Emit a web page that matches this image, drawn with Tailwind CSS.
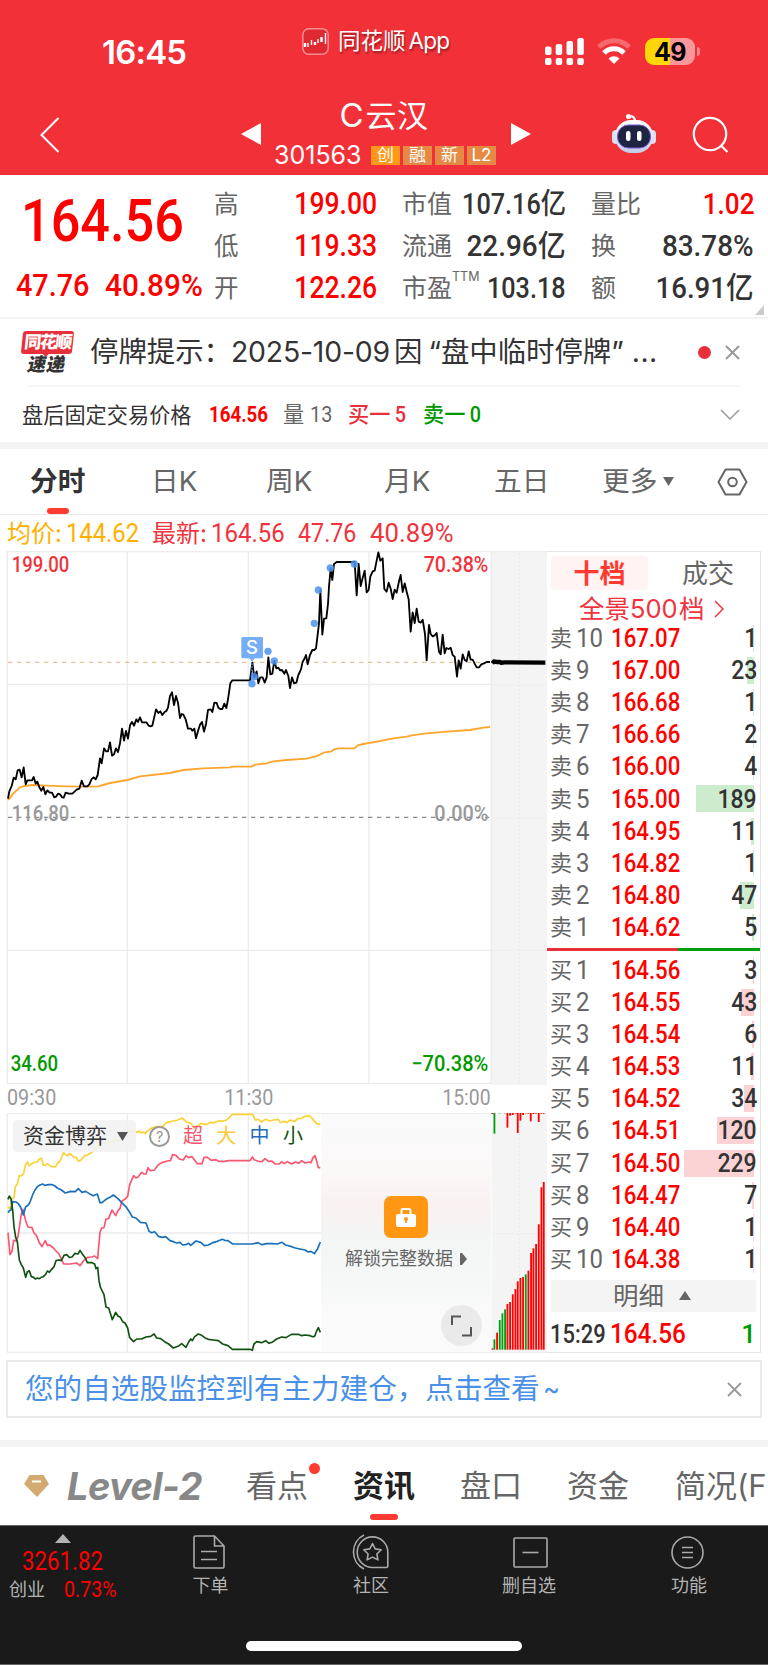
<!DOCTYPE html>
<html lang="zh-CN">
<head>
  <meta charset="UTF-8">
  <title>C云汉 301563</title>
  <meta name="viewport" content="width=device-width, initial-scale=1.0">
  <script src="https://cdn.jsdelivr.net/npm/@tailwindcss/browser@4"></script>
</head>
<body class="w-[768px] h-[1665px] overflow-hidden bg-white font-['Inter','Noto_Sans_CJK_SC',sans-serif] text-[#333] whitespace-nowrap">

  <!-- Header -->
  <header class="h-[175px] bg-[#f23038] text-white">
    <div class="h-[90px] flex items-start">
      <div class="w-[302px] pl-[102px] pt-[28px] text-[33px] leading-[48px] font-semibold tracking-[-0.800px]">16:45</div>
      <div class="w-[243px] flex items-center pt-[24px]">
        <svg class="w-[27px] h-[27px]" viewBox="0 0 27 27">
          <rect x=".8" y=".8" width="25.4" height="25.4" rx="6" fill="#e02a32" stroke="#f98c90" stroke-width="1.5"/>
          <path d="M3 15v4M13 14v3M19.500 9v5" stroke="#fff" stroke-width="2.400"/>
          <path d="M6 15v4M9.500 12v5M16 11v4M23.500 5v11" stroke="#fff" stroke-width="1.400"/>
        </svg>
        <span class="ml-[9px] text-[22.500px] leading-[34px] [text-shadow:1px_2px_2px_rgba(0,0,0,0.4)]">同花顺</span><span class="ml-[3px] text-[22.500px] leading-[34px] tracking-[-0.800px] [text-shadow:1px_2px_2px_rgba(0,0,0,0.4)]">App</span>
      </div>
      <div class="flex pt-[37px]">
        <svg class="w-[39px] h-[29px]" viewBox="0 0 39 29" fill="#fff">
          <rect x="0" y="9.500" width="6.500" height="8.500" rx="2"/><rect x="10.700" y="7" width="6.500" height="11" rx="2"/><rect x="21.500" y="4" width="6.500" height="14" rx="2"/><rect x="32.300" y="1" width="6.500" height="17" rx="2"/>
          <rect x="0" y="21" width="6.500" height="7" rx="2"/><rect x="10.700" y="21" width="6.500" height="7" rx="2"/><rect x="21.500" y="21" width="6.500" height="7" rx="2"/><rect x="32.300" y="21" width="6.500" height="7" rx="2"/>
        </svg>
        <svg class="ml-[13px] w-[34px] h-[29px]" viewBox="0 0 34 29" fill="none">
          <path d="M1.800 10a21.500 21.500 0 0 1 30.400 0" stroke="#fff" stroke-opacity=".28" stroke-width="5"/>
          <path d="M7 16a14 14 0 0 1 20 0" stroke="#fff" stroke-width="5"/>
          <path d="M17 27l-5.500-5.500a8 8 0 0 1 11 0z" fill="#fff"/>
        </svg>
        <div class="ml-[14px] mt-px w-[50px] h-[27px] rounded-[9px] bg-linear-to-r from-[#ffd60a] from-50% to-[#f9979b] to-50% text-black text-[25px] leading-[28px] font-bold text-center tracking-[-0.500px]">49</div>
        <div class="ml-[2px] mt-[10px] w-[3px] h-[9px] rounded-r-full bg-[#f9868b]"></div>
      </div>
    </div>
    <div class="h-[85px] flex">
      <svg class="ml-[40px] mt-[27px] w-[20px] h-[36px]" viewBox="0 0 20 36"><path d="M18.500 1L1.500 18l17 17" fill="none" stroke="#fff" stroke-width="2"/></svg>
      <svg class="ml-[181px] mt-[33px] w-[20px] h-[22px]" viewBox="0 0 20 22"><path d="M0 11L20 0v22z" fill="#fff"/></svg>
      <div class="w-[250px] flex flex-col items-center">
        <div class="mt-[4px] mr-[4px] text-[31px] leading-[42px] tracking-[0.500px]"><span class="inline-block w-[26px] text-[33px]">C</span>云汉</div>
        <div class="mt-[6px] flex items-center h-[24px] gap-[3px] text-[17px] leading-[19px] text-center">
          <span class="-ml-[2px] w-[94px] text-left text-[25px] leading-[24px]">301563</span>
          <span class="w-[29px] h-[19px] bg-[#ff9718]">创</span>
          <span class="w-[29px] h-[19px] bg-[#e58a45]">融</span>
          <span class="w-[29px] h-[19px] bg-[#e58a45]">新</span>
          <span class="w-[29px] h-[19px] bg-[#e58a45]">L2</span>
        </div>
      </div>
      <svg class="mt-[33px] w-[20px] h-[22px]" viewBox="0 0 20 22"><path d="M20 11L0 0v22z" fill="#fff"/></svg>
      <svg class="ml-[81px] mt-[23px] w-[44px] h-[42px]" viewBox="0 0 44 42">
        <defs><linearGradient id="head" x1="0" y1="0" x2="0" y2="1"><stop offset="0" stop-color="#fff"/><stop offset="1" stop-color="#c2cbe8"/></linearGradient></defs>
        <path d="M23 9c0-5-2-6-6-6" fill="none" stroke="#f3f5ff" stroke-width="2.500"/><circle cx="16.500" cy="3.500" r="2.500" fill="#fff"/>
        <rect x="0" y="17" width="8" height="14" rx="4" fill="#dbe0f3"/><rect x="36" y="17" width="8" height="14" rx="4" fill="#dbe0f3"/>
        <rect x="3" y="7" width="38" height="33" rx="16" fill="url(#head)"/>
        <rect x="5.500" y="12" width="33" height="23" rx="11" fill="#1d2541" stroke="#7a5be0" stroke-width="1"/>
        <rect x="14" y="18" width="4.500" height="10" rx="2.200" fill="#fff"/><rect x="25" y="18" width="4.500" height="10" rx="2.200" fill="#fff"/>
      </svg>
      <svg class="ml-[36px] mt-[26px] w-[38px] h-[38px]" viewBox="0 0 38 38" fill="none" stroke="#fff" stroke-width="2.200"><circle cx="18" cy="18" r="16.200"/><path d="M28.500 29l7 7"/></svg>
    </div>
  </header>

  <!-- Quote -->
  <section class="relative h-[144px] border-b-2 border-[#f2f2f2] flex pt-[8px]">
    <div class="w-[214px] font-['Roboto'] font-medium text-[#f00]">
      <div class="ml-[21px] mt-[4px] h-[66px] text-[60px] leading-[67px] origin-left scale-x-[0.870]">164.56</div>
      <div class="ml-[16px] mt-[11px] flex text-[32px] leading-[42px]"><span class="w-[89px] origin-left scale-x-[0.900]">47.76</span><span class="origin-left scale-x-[0.930]">40.89%</span></div>
    </div>
    <div class="w-[163px] text-[24.500px] leading-[42px] text-[#666]">
      <div class="flex justify-between"><span>高</span><b class="font-['Roboto'] font-medium text-[30.500px] text-[#f00] origin-right scale-x-[0.870]">199.00</b></div>
      <div class="flex justify-between"><span>低</span><b class="font-['Roboto'] font-medium text-[30.500px] text-[#f00] origin-right scale-x-[0.870]">119.33</b></div>
      <div class="flex justify-between"><span>开</span><b class="font-['Roboto'] font-medium text-[30.500px] text-[#f00] origin-right scale-x-[0.870]">122.26</b></div>
    </div>
    <div class="ml-[25px] w-[164px] text-[25px] leading-[42px] text-[#666]">
      <div class="flex justify-between"><span>市值</span><b class="w-[114px] flex justify-end font-['Roboto','Noto_Sans_CJK_SC'] font-medium text-[29px] text-[#333] origin-right scale-x-[0.870]">107.16亿</b></div>
      <div class="flex justify-between"><span>流通</span><b class="font-['Roboto','Noto_Sans_CJK_SC'] font-medium text-[30px] text-[#333] origin-right scale-x-[0.930]">22.96亿</b></div>
      <div class="flex justify-between"><span class="flex">市盈<i class="not-italic text-[12.500px] leading-[20px]">TTM</i></span><b class="-ml-4 font-['Roboto'] font-medium text-[30px] text-[#333] origin-right scale-x-[0.840]">103.18</b></div>
    </div>
    <div class="ml-[25px] w-[163px] text-[25px] leading-[42px] text-[#666]">
      <div class="flex justify-between"><span>量比</span><b class="font-['Roboto'] font-medium text-[30px] text-[#f00] origin-right scale-x-[0.870]">1.02</b></div>
      <div class="flex justify-between"><span>换</span><b class="font-['Roboto'] font-medium text-[30px] text-[#333] origin-right scale-x-[0.930]">83.78%</b></div>
      <div class="flex justify-between"><span>额</span><b class="font-['Roboto','Noto_Sans_CJK_SC'] font-medium text-[30px] text-[#333] origin-right scale-x-[0.920]">16.91亿</b></div>
    </div>
    <svg class="absolute right-[4px] bottom-[2px] w-[9px] h-[10px]" viewBox="0 0 9 10"><path d="M9 0v10H0z" fill="#ccc"/></svg>
  </section>

  <!-- Notice -->
  <section class="h-[68px] mx-[28px] flex items-center border-b-2 border-[#f5f5f5]">
    <div class="-ml-[6px] w-[68px] flex flex-col items-start">
      <div class="relative w-[51px] h-[23px] rounded-[3px] bg-[#e8303a] -skew-x-6 text-white text-[17px] leading-[22px] font-black text-center tracking-[-1.500px]">同花顺
        <svg class="absolute left-[21px] -bottom-[3px] w-[8px] h-[4px]" viewBox="0 0 8 4"><path d="M0 0h8L4 4z" fill="#e8303a"/></svg>
      </div>
      <div class="ml-[6px] h-[20px] text-[18.500px] leading-[21px] font-black -skew-x-12 tracking-[0.500px]">速递</div>
    </div>
    <div class="w-[592px] text-[28.400px] leading-[40px] flex"><span>停牌提示：</span><span class="-ml-px w-[163px] tracking-[-0.200px]">2025-10-09</span><span>因</span><span class="ml-[6px] font-['Inter']">“</span><span>盘中临时停牌</span><span class="font-['Inter']">”</span><span class="ml-[8px] font-['Inter'] tracking-[0.500px]">...</span></div>
    <div class="ml-[16px] w-[13px] h-[13px] rounded-full bg-[#e8303a]"></div>
    <svg class="ml-[14px] w-[15px] h-[15px] shrink-0" viewBox="0 0 15 15"><path d="M1 1l13 13M14 1L1 14" stroke="#999" stroke-width="2"/></svg>
  </section>
  <section class="h-[55px] pl-[22px] pr-[28px] flex items-center text-[21.200px] leading-[30px]">
    <span class="w-[187px]">盘后固定交易价格</span>
    <span class="w-[74px] font-['Roboto'] font-bold text-[22px] text-[#f00] origin-left scale-x-[0.850]">164.56</span>
    <span class="w-[65px] text-[#666]">量 <span class="font-['Roboto'] text-[22px] inline-block origin-left scale-x-90">13</span></span>
    <span class="w-[75px] font-medium text-[#e8303a]">买一<span class="ml-[4px] font-['Roboto'] text-[22px] inline-block scale-x-90">5</span></span>
    <span class="font-medium text-[#009900]">卖一<span class="ml-[4px] font-['Roboto'] text-[22px] inline-block scale-x-90">0</span></span>
    <svg class="ml-auto w-[20px] h-[11px]" viewBox="0 0 20 11"><path d="M1 1l9 9 9-9" fill="none" stroke="#999" stroke-width="1.500"/></svg>
  </section>
  <div class="h-[7px] bg-[#f4f4f4]"></div>

  <!-- Chart tabs -->
  <nav class="h-[66px] border-b border-[#e9e9e9] flex items-center text-[27.700px] leading-[65px] text-[#666]">
    <div class="relative w-[122px] pl-[30px] font-bold text-[#333]">分时<i class="absolute left-[47px] bottom-0 w-[22px] h-[6px] rounded-[3px] bg-[#ff3a30]"></i></div>
    <div class="w-[114px] pl-[29px]">日K</div>
    <div class="w-[118px] pl-[30px]">周K</div>
    <div class="w-[110px] pl-[30px]">月K</div>
    <div class="w-[108px] pl-[30px]">五日</div>
    <div class="w-[145px] pl-[30px] flex items-center">更多<svg class="ml-[6px] w-[11px] h-[9px]" viewBox="0 0 11 9"><path d="M0 0h11L5.500 9z" fill="#666"/></svg></div>
    <svg class="w-[31px] h-[28px]" viewBox="0 0 31 28" fill="none" stroke="#666" stroke-width="2"><path d="M8.500 1.500h14L29.500 14l-7 12.500h-14L1.500 14z" stroke-linejoin="round"/><circle cx="15.500" cy="14" r="4.300"/></svg>
  </nav>

  <!-- Average / last price -->
  <div class="h-[36px] pl-[7px] pt-px flex items-center text-[24px] leading-[35px] text-[#f0333c]">
    <span class="w-[59px] text-[#ffb100]">均价:</span><span class="w-[86px] font-['Roboto'] text-[25px] text-[#ffb100] origin-left scale-x-95">144.62</span>
    <span class="w-[59px]">最新:</span><span class="w-[87px] font-['Roboto'] text-[25px] origin-left scale-x-[0.960]">164.56</span>
    <span class="w-[72px] font-['Roboto'] text-[25px] origin-left scale-x-[0.930]">47.76</span><span class="font-['Roboto'] text-[25px] origin-left scale-x-[1.030]">40.89%</span>
  </div>

  <main class="h-[802px] flex">
    <div class="w-[547px]">
      <!-- Intraday chart, three units per pixel -->
      <svg class="block w-[547px] h-[534px]" viewBox="0 0 1641 1602" font-family="Roboto" font-size="65" font-weight="500" fill="none">
        <rect x="1474" y="2" width="168" height="1600" fill="#f4f4f4"/>
        <path d="M21 2H1641M21 400H1474M21 1198H1474M21 1597H1474M22 0V1600M382 0V1600M745 0V1600M1107 0V1600M1474 0V1600" stroke="#ececec" stroke-width="4"/>
        <path d="M1558 6V1600M1478 402H1638M1478 802H1638M1478 1198H1638" stroke="#e6e6e6" stroke-width="3" stroke-dasharray="5 7"/>
        <path d="M24 334H1472" stroke="#e8c092" stroke-width="3.500" stroke-dasharray="13 14"/>
        <path d="M24 799H1472" stroke="#8a8a8a" stroke-width="3.500" stroke-dasharray="13 14"/>
        <g transform="translate(0 -33)" stroke-linejoin="round">
          <polyline stroke="#ffa52c" stroke-width="5.500" points="24,779 30,775 38,762 50,751 60,742 72,738 100,735 140,737 200,739 250,740 295,739 330,729 382,720 420,709 510,699 550,690 610,685 690,682 696,680 754,680 765,674 800,670 820,664 860,660 920,656 945,650 960,644 970,638 995,634 1003,628 1015,625 1064,625 1073,616 1090,612 1135,604 1180,595 1220,590 1235,586 1280,580 1340,575 1410,570 1450,563 1470,561"/>
          <polyline stroke="#000" stroke-width="5.500" points="24,776 28,754 35,738 41,713 47,718 53,691 59,689 65,712 71,682 77,733 82,721 96,721 101,711 107,731 112,725 118,742 124,752 130,741 136,763 142,751 149,758 156,758 163,772 168,770 174,761 180,763 186,772 191,773 197,758 206,761 217,761 230,749 238,746 245,722 252,739 262,739 268,733 275,717 281,712 287,718 293,705 300,655 305,670 312,625 318,634 324,634 330,607 336,647 342,643 348,625 354,636 360,610 366,566 372,602 378,573 384,596 390,556 396,546 402,557 409,538 414,546 420,532 426,547 439,547 446,557 452,559 457,557 468,508 475,519 481,514 487,525 494,516 499,513 504,503 510,468 516,457 522,495 528,468 534,488 540,534 545,522 550,524 557,538 564,566 573,566 577,572 583,566 588,595 594,573 600,554 606,546 612,575 618,552 624,510 632,508 637,516 643,488 650,489 655,503 661,507 667,507 673,491 679,504 684,478 691,430 697,421 750,421 757,368 763,412 770,394 775,430 781,412 788,412 794,428 800,412 805,352 811,403 817,401 823,362 829,385 835,383 840,391 846,390 853,401 858,390 865,408 870,444 876,412 882,430 889,428 895,405 903,388 908,365 913,357 918,345 923,373 930,345 937,330 943,330 948,325 957,250 961,150 967,284 972,236 979,235 984,192 987,140 992,85 997,120 1002,72 1010,66 1064,66 1070,166 1076,72 1082,138 1087,118 1094,92 1100,157 1106,150 1111,110 1118,94 1124,92 1135,37 1141,62 1148,55 1153,147 1160,155 1166,128 1172,146 1178,177 1184,149 1190,158 1197,124 1202,105 1208,156 1214,130 1220,155 1226,178 1232,275 1238,217 1244,249 1250,206 1256,245 1262,248 1268,239 1275,282 1280,361 1287,255 1292,282 1298,289 1304,286 1310,279 1317,335 1322,343 1328,284 1334,340 1339,324 1346,327 1352,323 1358,345 1364,350 1371,410 1376,361 1382,386 1388,343 1394,360 1400,364 1406,334 1412,359 1418,359 1424,371 1430,382 1437,382 1444,373 1452,370 1460,366 1470,366"/>
          <polyline stroke="#000" stroke-width="13" points="1477,370 1482,364 1490,366 1500,366 1504,369 1512,367 1636,368"/>
          <g fill="#4b93ef" fill-opacity=".85"><circle cx="756" cy="431" r="11"/><circle cx="763" cy="410" r="11"/><circle cx="804" cy="334" r="11"/><circle cx="823" cy="363" r="11"/><circle cx="943" cy="250" r="11"/><circle cx="955" cy="150" r="11"/><circle cx="991" cy="84" r="11"/><circle cx="1063" cy="72" r="11"/></g>
          <path d="M756 370V420" stroke="#4b93ef" stroke-width="4" stroke-dasharray="5 4"/>
          <path d="M728 291h57a4 4 0 0 1 4 4v56a4 4 0 0 1-4 4h-21l-8 10-8-10h-20a4 4 0 0 1-4-4v-56a4 4 0 0 1 4-4z" fill="#75aef4"/>
          <text x="738" y="343" font-family="Inter" font-size="54" font-weight="500" fill="#fff" textLength="36" lengthAdjust="spacingAndGlyphs">S</text>
        </g>
        <text x="35" y="62" fill="#f0333c" textLength="173" lengthAdjust="spacingAndGlyphs">199.00</text>
        <text x="1271" y="62" fill="#f0333c" textLength="194" lengthAdjust="spacingAndGlyphs">70.38%</text>
        <text x="35" y="811" fill="#999" textLength="173" lengthAdjust="spacingAndGlyphs">116.80</text>
        <text x="1303" y="811" fill="#999" textLength="162" lengthAdjust="spacingAndGlyphs">0.00%</text>
        <text x="32" y="1560" fill="#009900" textLength="142" lengthAdjust="spacingAndGlyphs">34.60</text>
        <text x="1234" y="1560" fill="#009900" textLength="231" lengthAdjust="spacingAndGlyphs">−70.38%</text>
      </svg>
      <div class="h-[28px] pl-[7px] w-[491px] flex justify-between items-start font-['Roboto'] text-[21.500px] leading-[26px] text-[#999]">
        <span class="origin-left scale-x-[0.920]">09:30</span><span class="scale-x-[0.920]">11:30</span><span class="origin-right scale-x-[0.900]">15:00</span>
      </div>

      <!-- Capital flow -->
      <div class="relative h-[240px]">
        <svg class="block w-[547px] h-[240px]" viewBox="0 0 1641 720" fill="none">
          <defs>
            <linearGradient id="haze" x1="0" y1="0" x2="0" y2="1"><stop offset="0" stop-color="#fafafa"/><stop offset=".25" stop-color="#fbf8f8"/><stop offset=".39" stop-color="#f9f1f2"/><stop offset=".52" stop-color="#f3f5f5"/><stop offset=".68" stop-color="#f5f8f6"/><stop offset=".85" stop-color="#fafafa"/></linearGradient>
          </defs>
          <g transform="translate(0 -159)">
            <path d="M21 160H1641M21 519H1474M21 877H1641M22 160V877M382 160V877M745 160V877" stroke="#ececec" stroke-width="4"/>
            <rect x="963" y="163" width="510" height="712" fill="url(#haze)"/>
            <rect x="1475" y="162" width="166" height="714" fill="#f4f4f4"/>
            <path d="M1558 162V876M1478 521H1638" stroke="#e6e6e6" stroke-width="3" stroke-dasharray="5 7"/>
            <g stroke-width="5" stroke-linejoin="round">
              <polyline stroke="#fbd233" points="24,440 30,448 35,418 42,412 46,380 52,372 58,347 66,347 71,340 76,316 82,306 88,318 94,312 100,309 106,306 112,306 118,297 124,295 130,315 136,316 142,311 148,316 154,320 167,320 173,309 180,303 191,278 197,285 203,287 209,280 215,285 222,292 229,292 236,304 242,301 254,287 262,285 275,277 284,268 296,257 310,249 330,244 370,239 378,218 384,215 405,215 412,217 418,213 424,219 430,216 435,221 442,214 455,204 470,200 488,199 500,187 520,183 533,180 546,174 560,186 573,190 582,204 592,198 605,190 618,194 631,187 642,188 658,182 668,184 680,180 697,163 758,163 766,180 775,178 785,186 796,178 810,183 820,180 835,178 841,188 852,184 862,187 870,180 884,184 893,176 905,175 915,169 928,167 937,176 949,190 961,193"/>
              <polyline stroke="#fa5670" points="24,518 30,584 36,574 41,541 48,543 54,530 64,462 69,448 77,482 84,501 96,503 102,519 109,526 118,548 126,560 136,542 142,556 149,555 160,564 168,573 176,581 191,612 210,612 230,609 240,617 250,603 262,592 275,591 284,588 293,596 296,560 300,517 305,504 312,503 318,477 326,475 336,450 347,467 354,452 360,445 366,423 374,418 383,409 389,374 401,347 408,354 415,350 425,337 432,342 438,342 444,323 451,332 463,330 475,314 488,307 502,303 511,302 518,284 528,286 538,297 550,300 558,287 566,293 576,290 582,298 592,311 606,311 612,292 622,292 634,301 648,299 656,304 675,304 686,302 750,302 757,291 764,300 775,304 786,305 795,296 805,304 815,303 826,312 838,312 845,305 853,311 862,305 875,312 886,306 896,310 905,302 915,309 928,306 933,308 939,293 945,287 951,307 955,323 961,323"/>
              <polyline stroke="#1b6fb9" points="24,458 28,452 33,450 38,425 48,426 54,430 62,442 70,465 77,440 84,436 89,429 98,404 105,390 112,380 120,375 128,372 134,376 146,374 157,374 165,378 172,384 184,390 196,399 212,394 226,395 235,386 246,397 257,394 268,401 280,407 292,402 300,428 306,428 318,418 330,412 340,405 354,416 365,428 377,439 389,457 397,471 408,474 421,487 438,489 447,514 455,518 464,515 475,529 486,532 497,530 510,542 520,545 530,549 540,547 548,555 557,554 566,550 572,556 588,543 602,547 613,557 625,555 638,548 652,544 667,538 674,541 684,542 698,552 757,552 774,548 786,554 800,551 817,551 832,552 846,547 857,555 875,560 886,564 900,567 915,570 925,576 933,574 943,581 953,566 961,546"/>
              <polyline stroke="#115111" points="24,418 28,408 33,416 38,450 42,500 47,532 52,545 58,600 64,614 70,624 77,652 82,636 88,632 94,650 101,652 106,657 112,654 118,656 124,652 130,650 137,643 142,633 148,637 155,628 162,620 168,602 176,600 184,602 192,586 200,584 208,592 216,591 225,580 234,582 240,571 247,582 256,594 262,608 276,608 284,612 288,626 293,622 297,662 301,681 312,704 318,741 326,744 331,760 337,779 347,757 354,768 361,772 368,785 375,789 383,804 389,833 401,845 410,837 425,837 438,831 452,829 462,822 470,834 482,836 494,845 506,852 520,864 534,859 545,851 558,862 566,846 572,837 577,842 584,830 595,822 605,826 614,833 625,838 640,840 655,842 668,852 684,857 697,868 750,868 757,871 762,852 770,845 785,848 797,842 807,850 816,847 830,837 845,831 858,833 874,823 895,823 905,827 915,825 930,827 938,830 944,829 949,815 955,803 961,817"/>
            </g>
          </g>
          <g id="bars" transform="translate(930 -159)"></g>
        </svg>
        <div class="absolute left-[13px] top-[7px] w-[123px] h-[32px] rounded bg-[#f2f2f2]/90 flex items-center pl-[10px] text-[21px] leading-[32px]">资金博弈
          <svg class="ml-[10px] w-[11px] h-[9px]" viewBox="0 0 11 9"><path d="M0 0h11L5.500 9z" fill="#555"/></svg>
        </div>
        <div class="absolute left-[149px] top-[13px] w-[21px] h-[21px] rounded-full border-2 border-[#999] text-[#999] text-[15px] leading-[17px] text-center">?</div>
        <div class="absolute left-[183px] top-[7px] flex gap-[13.300px] text-[20px] leading-[32px]"><span class="text-[#fa5670]">超</span><span class="text-[#fbc933]">大</span><span class="text-[#1b6fb9]">中</span><span class="text-[#115111]">小</span></div>
        <div class="absolute left-[321px] top-[83px] w-[170px] flex flex-col items-center">
          <svg class="w-[44px] h-[42px] -ml-[1px]" viewBox="0 0 44 42"><rect width="44" height="42" rx="7" fill="#ff9712"/><rect x="12" y="18" width="20" height="13" rx="2" fill="#fff"/><path d="M17.500 18v-3.500a1.500 1.500 0 0 1 1.500-1.500h6a1.500 1.500 0 0 1 1.500 1.500V18" fill="none" stroke="#fff" stroke-width="2"/><circle cx="22" cy="23" r="2" fill="#ff9712"/><path d="M22 23v4" stroke="#ff9712" stroke-width="1.800"/></svg>
          <div class="mt-[8px] flex items-center text-[18px] leading-[26px] text-[#666]">解锁完整数据<svg class="ml-[7px] w-[7px] h-[12px]" viewBox="0 0 7 12"><path d="M0 0l2 0 5 6-5 6H0z" fill="#666"/></svg></div>
        </div>
        <div class="absolute left-[441px] top-[192px] w-[41px] h-[41px] rounded-full bg-[#eaeaea]">
          <svg class="w-[41px] h-[41px]" viewBox="0 0 41 41"><path d="M11 20v-8.500h9M30 22v8.500h-9" fill="none" stroke="#555" stroke-width="2"/></svg>
        </div>
      </div>
    </div>

    <!-- Order book -->
    <div class="w-[214px] border-t border-r border-b border-[#e6e6e6] pl-[3px]">
      <div class="flex mt-[4px] ml-px text-[26px] leading-[36px] text-center">
        <div class="w-[97px] h-[34px] rounded bg-[#fff3f3] text-[#ff3a30] font-bold">十档</div>
        <div class="w-[112px] h-[34px] pl-[8px] text-[#666]">成交</div>
      </div>
      <div class="h-[33px] pt-[4px] pl-[29px] flex items-center text-[25.500px] leading-[29px] text-[#f0333c]">全景<span class="inline-block w-[49px]"><span class="inline-block">500</span></span>档
        <svg class="ml-[9px] w-[10px] h-[18px]" viewBox="0 0 10 18"><path d="M1 1l8 8-8 8" fill="none" stroke="#f0333c" stroke-width="1.500"/></svg>
      </div>
      <div id="asks"></div>
      <div class="mt-[4px] -ml-[3px] h-[3px] flex"><i class="w-[131px] bg-[#e8303a]"></i><i class="flex-1 bg-[#009f10]"></i></div>
      <div id="bids" class="mt-[4px]"></div>
      <div class="mt-[4px] ml-px w-[205px] h-[32px] bg-[#f4f4f4] flex items-center pl-[62px] text-[25.500px] leading-[32px] text-[#666]">明细
        <svg class="ml-[15px] w-[12px] h-[9px]" viewBox="0 0 12 9"><path d="M0 9h12L6 0z" fill="#666"/></svg>
      </div>
      <div class="mt-[5px] w-[206px] h-[34px] flex items-center font-['Roboto'] text-[26px] leading-[34px]">
        <span class="w-[60px] text-[25.500px] font-medium origin-left scale-x-[0.860]">15:29</span><span class="font-medium text-[27px] text-[#f00] origin-left scale-x-[0.900]">164.56</span><span class="ml-auto font-medium text-[#009900]">1</span>
      </div>
    </div>
  </main>

  <!-- Banner -->
  <div class="mt-[7px] ml-[6px] w-[756px] h-[58px] border-2 border-[#e9e9e9] flex items-center justify-between pl-[17px] pr-[18px] text-[28.600px] leading-[54px] text-[#4a90e8]">
    <span>您的自选股监控到有主力建仓，点击查看<span class="inline-block ml-[2px] scale-x-90">~</span></span>
    <svg class="w-[15px] h-[15px]" viewBox="0 0 15 15"><path d="M1 1l13 13M14 1L1 14" stroke="#999" stroke-width="1.800"/></svg>
  </div>
  <div class="mt-[22px] h-[7px] bg-[#f4f4f4]"></div>

  <!-- Section tabs -->
  <nav class="h-[78px] flex text-[31px] leading-[78px] text-[#666] overflow-hidden">
    <svg class="ml-[24px] mt-[28px] w-[25px] h-[22px] shrink-0" viewBox="0 0 25 22"><path d="M5.500 0h14L25 9 13 22 0 9z" fill="#d3ab72"/><path d="M8 6.500h9" stroke="#fff" stroke-width="2"/></svg>
    <div class="ml-[18px] w-[179px] shrink-0 text-[38px] font-bold italic text-[#888] tracking-[-0.600px]">Level-2</div>
    <div class="relative w-[107px] shrink-0">看点<i class="absolute left-[63px] top-[16px] w-[11px] h-[11px] rounded-full bg-[#ff3a30]"></i></div>
    <div class="relative w-[107px] shrink-0 font-bold text-[#222]">资讯<i class="absolute left-[17px] bottom-[5px] w-[28px] h-[6px] rounded-[3px] bg-[#ff3a30]"></i></div>
    <div class="w-[107px] shrink-0">盘口</div>
    <div class="w-[108px] shrink-0">资金</div>
    <div>简况(F</div>
  </nav>

  <!-- Bottom bar -->
  <footer class="h-[140px] bg-[#1a1a1a] border-t border-b border-[#666] text-[#b3b3b3]">
    <div class="h-[115px] flex text-[18px] leading-[26px]">
      <div class="w-[138px] pl-[9px]">
        <svg class="ml-[46px] mt-[8px] w-[16px] h-[9px]" viewBox="0 0 16 9"><path d="M0 9h16L8 0z" fill="#b3b3b3"/></svg>
        <div class="ml-[13px] mt-[5px] font-['Roboto'] text-[25px] leading-[28px] text-[#f00] origin-left scale-x-[0.890]">3261.82</div>
        <div class="flex mt-[1px]"><span class="w-[55px]">创业</span><span class="font-['Roboto'] text-[22px] leading-[25px] text-[#f00] origin-left scale-x-[0.890]">0.73%</span></div>
      </div>
      <div class="w-[142px] flex flex-col items-center">
        <svg class="mt-[9px] w-[32px] h-[34px]" viewBox="0 0 32 34" fill="none" stroke="#aaa" stroke-width="1.600"><path d="M2.500 1h19L31 11v20.500a1.500 1.500 0 0 1-1.500 1.500h-27A1.500 1.500 0 0 1 1 31.500v-29A1.500 1.500 0 0 1 2.500 1zM21.500 1v10H31M8 16.500h16M8 24.500h16"/></svg>
        <span class="mt-[4px] ml-[3px]">下单</span>
      </div>
      <div class="w-[180px] flex flex-col items-center">
        <svg class="mt-[8px] w-[37px] h-[36px]" viewBox="0 0 37 36" fill="none" stroke="#aaa" stroke-width="1.600"><path d="M20.500 33.500A15.300 15.300 0 1 1 35.800 18v14a1.500 1.500 0 0 1-1.500 1.500z"/><path d="M12 1A19 19 0 0 0 12 35"/><path d="M20.500 9.500l2.700 5.400 6 .9-4.300 4.200 1 5.900-5.400-2.800-5.400 2.800 1-5.900-4.300-4.200 6-.9z" stroke-linejoin="round"/></svg>
        <span class="mt-[3px] ml-[2px]">社区</span>
      </div>
      <div class="w-[140px] flex flex-col items-center">
        <svg class="mt-[11px] w-[35px] h-[31px]" viewBox="0 0 35 31" fill="none" stroke="#aaa" stroke-width="1.600"><rect x="1" y="1" width="33" height="29" rx="1"/><path d="M9.500 15.500h16"/></svg>
        <span class="mt-[5px] -ml-[2px]">删自选</span>
      </div>
      <div class="w-[168px] flex flex-col items-center pl-[7px]">
        <svg class="mt-[10px] w-[33px] h-[33px]" viewBox="0 0 33 33" fill="none" stroke="#aaa" stroke-width="1.600"><circle cx="16.500" cy="16.500" r="15.500"/><path d="M11 11.500h11M11 16.500h11M11 21.500h11"/></svg>
        <span class="mt-[4px] ml-[3px]">功能</span>
      </div>
    </div>
    <div class="mx-auto w-[276px] h-[10px] rounded-full bg-white"></div>
  </footer>

  <script>
    const asks = [[10, '167.07', 1], [9, '167.00', 23], [8, '166.68', 1], [7, '166.66', 2], [6, '166.00', 4],
      [5, '165.00', 189], [4, '164.95', 11], [3, '164.82', 1], [2, '164.80', 47], [1, '164.62', 5]];
    const bids = [[1, '164.56', 3], [2, '164.55', 43], [3, '164.54', 6], [4, '164.53', 11], [5, '164.52', 34],
      [6, '164.51', 120], [7, '164.50', 229], [8, '164.47', 7], [9, '164.40', 1], [10, '164.38', 1]];

    function renderLevels(id, side, rows, color) {
      document.getElementById(id).innerHTML = rows.map(([level, price, qty]) => `
        <div class="relative w-[207px] h-[32.100px] flex items-center leading-[32px] font-['Roboto','Noto_Sans_CJK_SC']">
          <i class="absolute right-[3px] top-[2px] h-[27px] ${color}" style="width:${Math.max(1, qty * 0.306)}px"></i>
          <span class="w-[26px] text-[22px] text-[#666]">${side}</span>
          <span class="w-[35px] text-[25px] text-[#666] origin-left scale-x-[0.960]">${level}</span>
          <span class="text-[25px] font-medium text-[#f00] origin-left scale-x-[0.890]">${price}</span>
          <span class="relative ml-auto text-[25px] font-medium origin-right scale-x-[0.920]">${qty}</span>
        </div>`).join('');
    }
    renderLevels('asks', '卖', asks, 'bg-[#cdebcd]');
    renderLevels('bids', '买', bids, 'bg-[#fbd3d5]');

    // After-hours volume: [x, top, falling]
    const volume = [[547, 865], [553, 838, 1], [561, 818], [569, 780, 1], [577, 760, 1], [585, 748, 1], [592, 732],
      [600, 726], [608, 703], [616, 687], [623, 664], [631, 654], [639, 651], [647, 643, 1], [655, 632], [663, 579],
      [670, 565], [678, 552], [686, 493], [694, 382], [701, 366]];
    // Unmatched volume hangs from the top edge: [x, bottom, falling]
    const unmatched = [[547, 162], [553, 221, 1], [569, 160, 1], [584, 160, 1], [592, 203], [600, 167], [608, 165],
      [616, 161], [623, 219], [631, 182], [639, 165], [647, 160], [655, 161], [662, 184], [670, 162], [678, 161], [686, 186], [694, 161], [701, 161]];
    const bar = (x, y, h, down) => `<rect x="${x - 2.500}" y="${y}" width="5.500" height="${h}" fill="${down ? '#009f10' : '#f00'}"/>`;
    document.getElementById('bars').innerHTML =
      volume.map(([x, top, down]) => bar(x, top, 869 - top, down)).join('') +
      unmatched.map(([x, bottom, down]) => bar(x, 156, bottom - 156, down)).join('');
  </script>
</body>
</html>
